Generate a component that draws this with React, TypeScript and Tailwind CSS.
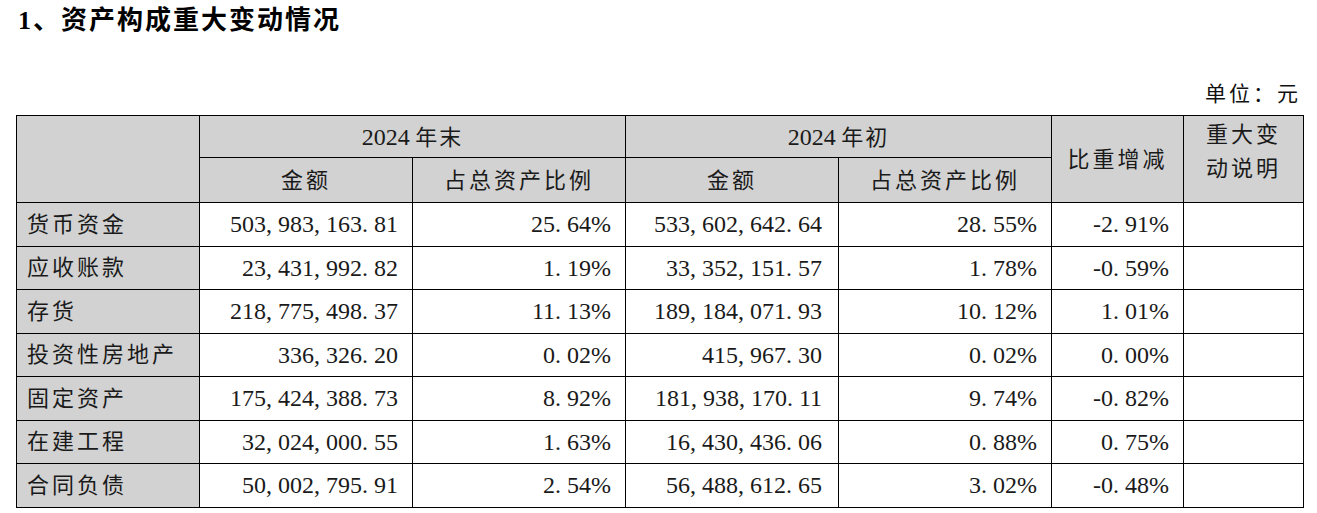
const rows = [
  ['货币资金', '503, 983, 163. 81', '25. 64%', '533, 602, 642. 64', '28. 55%', '-2. 91%'],
  ['应收账款', '23, 431, 992. 82', '1. 19%', '33, 352, 151. 57', '1. 78%', '-0. 59%'],
  ['存货', '218, 775, 498. 37', '11. 13%', '189, 184, 071. 93', '10. 12%', '1. 01%'],
  ['投资性房地产', '336, 326. 20', '0. 02%', '415, 967. 30', '0. 02%', '0. 00%'],
  ['固定资产', '175, 424, 388. 73', '8. 92%', '181, 938, 170. 11', '9. 74%', '-0. 82%'],
  ['在建工程', '32, 024, 000. 55', '1. 63%', '16, 430, 436. 06', '0. 88%', '0. 75%'],
  ['合同负债', '50, 002, 795. 91', '2. 54%', '56, 488, 612. 65', '3. 02%', '-0. 48%'],
];

const cjk = "font-['Liberation_Serif','Noto_Sans_CJK_SC',serif]";

export default function App() {
  return (
    <div className={`w-[1317px] h-[513px] bg-white text-black ${cjk}`}>
      <h1 className="pl-[18px] pt-[4px] text-[26px] leading-[34px] font-bold tracking-[2px]">
        1、资产构成重大变动情况
      </h1>
      <div className="flex justify-end pr-[16px] mt-[41px] text-[21px] leading-[30px] tracking-[3px] text-[#111]">
        单位：元
      </div>
      <table className="ml-[16px] mt-[6px] w-[1287px] table-fixed border-collapse border border-black text-[22px] text-[#1a1a1a]">
        <colgroup>
          <col className="w-[183px]" />
          <col className="w-[213px]" />
          <col className="w-[213px]" />
          <col className="w-[213px]" />
          <col className="w-[213px]" />
          <col className="w-[132px]" />
          <col className="w-[120px]" />
        </colgroup>
        <thead className="bg-[#d2d2d2]">
          <tr className="h-[42px]">
            <th rowSpan={2} className="border border-black font-normal"></th>
            <th colSpan={2} className="border border-black font-normal">
              <span className="text-[24px]">2024</span> <span className="tracking-[2px]">年末</span>
            </th>
            <th colSpan={2} className="border border-black font-normal">
              <span className="text-[24px]">2024</span> <span className="tracking-[2px]">年初</span>
            </th>
            <th rowSpan={2} className="border border-black font-normal tracking-[3px]">比重增减</th>
            <th rowSpan={2} className="border border-black font-normal leading-[34px] tracking-[3px] pb-[14px]">
              重大变<br />动说明
            </th>
          </tr>
          <tr className="h-[45px]">
            <th className="border border-black font-normal tracking-[3px]">金额</th>
            <th className="border border-black font-normal tracking-[3px]">占总资产比例</th>
            <th className="border border-black font-normal tracking-[3px]">金额</th>
            <th className="border border-black font-normal tracking-[3px]">占总资产比例</th>
          </tr>
        </thead>
        <tbody>
          {rows.map((r) => (
            <tr key={r[0]} className="h-[43.5px]">
              <td className="border border-black bg-[#d2d2d2] pl-[10px] tracking-[3px]">{r[0]}</td>
              {r.slice(1).map((v, i) => (
                <td
                  key={i}
                  className={`border border-black text-right whitespace-nowrap text-[24px] ${i === 2 ? 'pr-[16px]' : 'pr-[14px]'}`}
                >
                  {v}
                </td>
              ))}
              <td className="border border-black"></td>
            </tr>
          ))}
        </tbody>
      </table>
    </div>
  );
}
